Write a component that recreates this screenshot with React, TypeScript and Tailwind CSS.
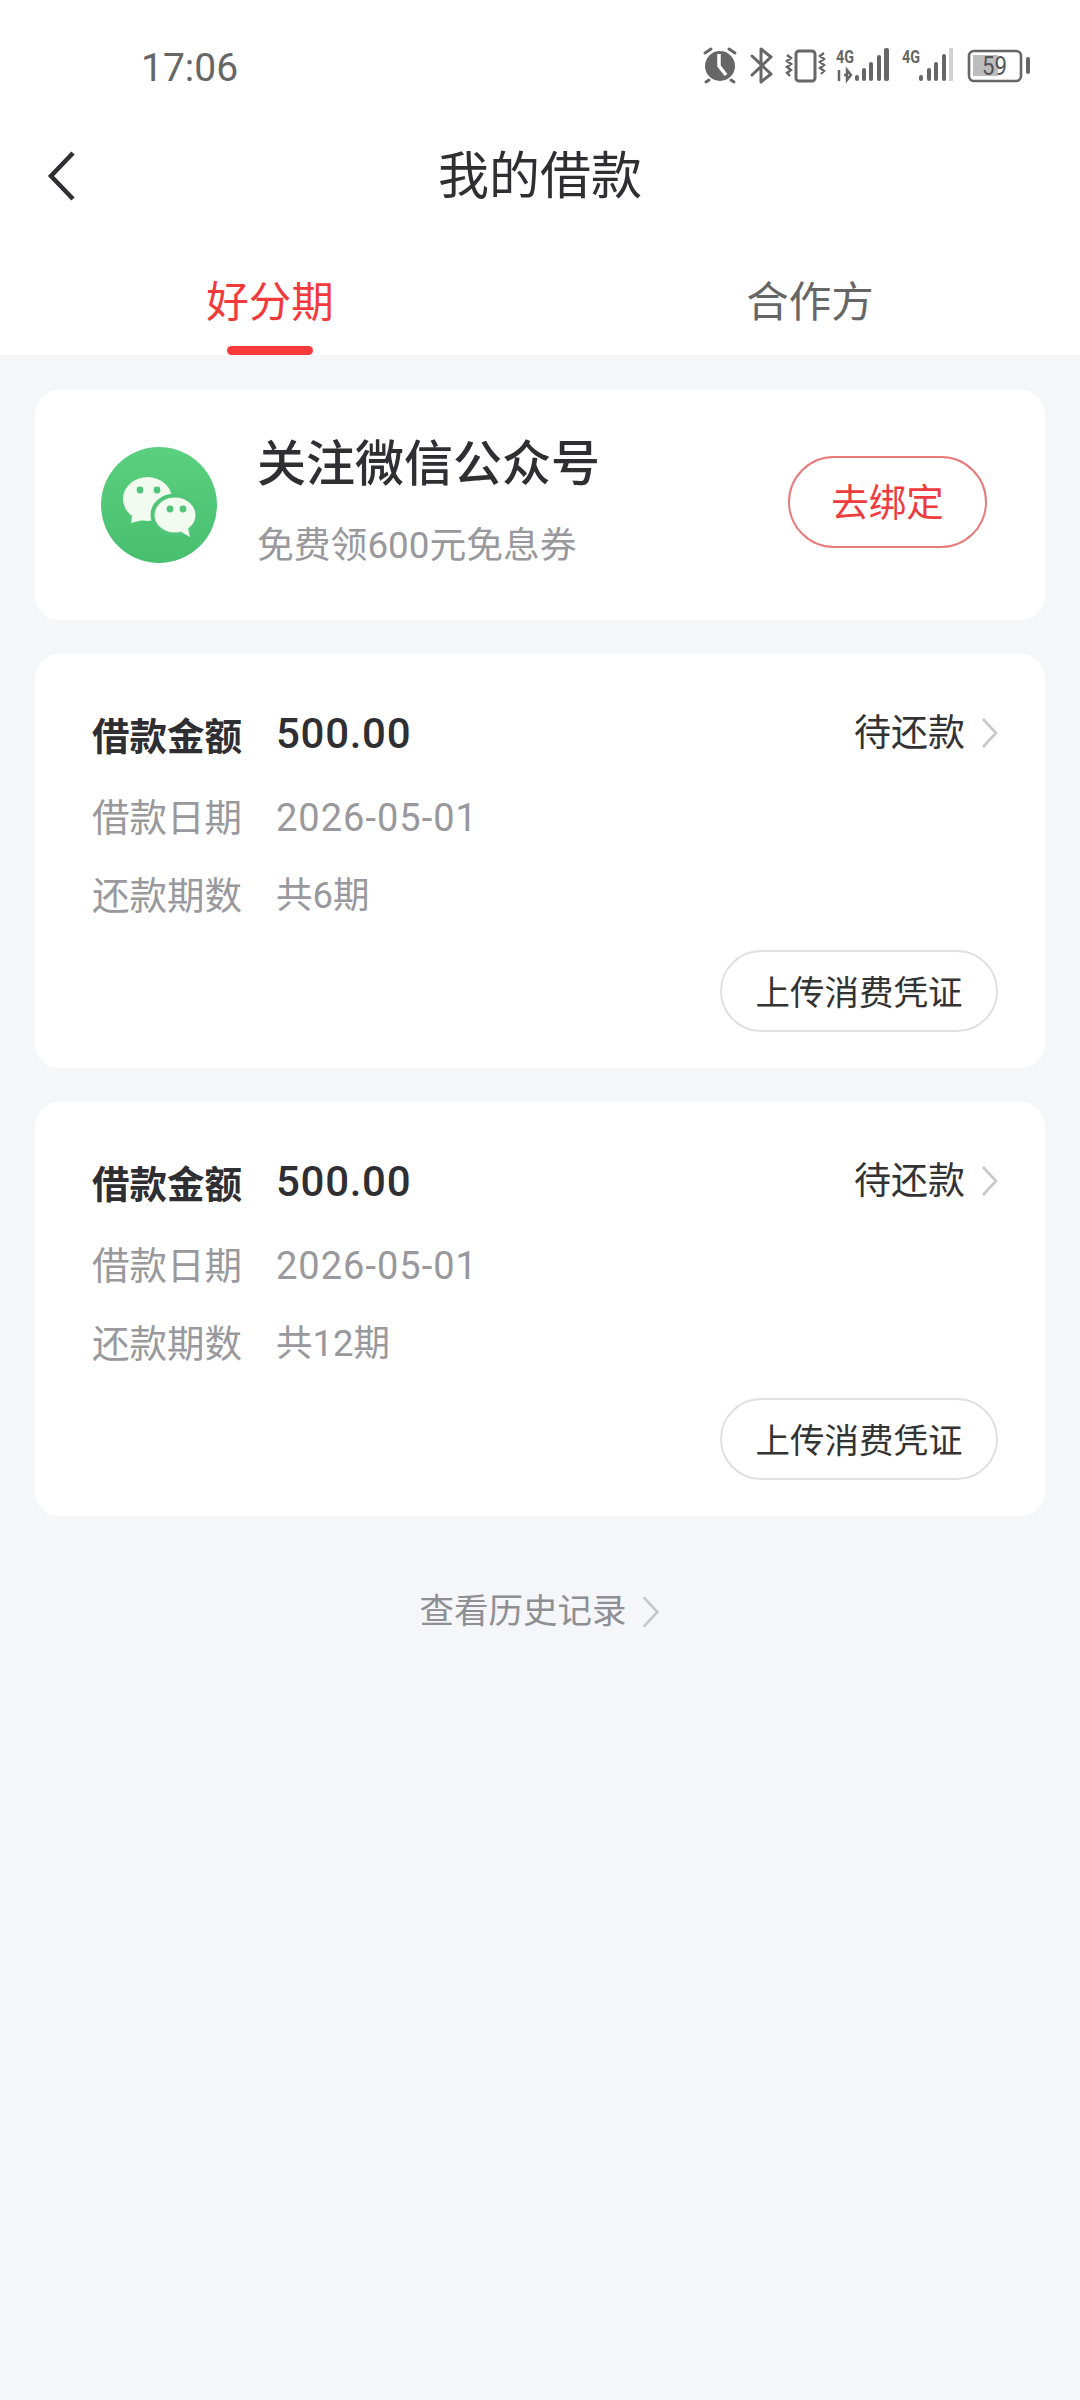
import React from "react";

const FONT = "font-['Roboto','Noto_Sans_CJK_SC',sans-serif]";

// status bar icons, drawn at the size they have in the screenshot
function StatusIcons() {
  const c = "#666666";
  return (
    <svg width="330" height="50" viewBox="0 0 330 50" fill="none">
      {/* alarm */}
      <circle cx="20" cy="24" r="15" fill={c} />
      <path d="M19 12v12l7 9" stroke="#fff" strokeWidth="3.5" />
      <path d="M5 11l6-4M35 11l-6-4M9 38l-3 2M31 38l3 2" stroke={c} strokeWidth="3" strokeLinecap="round" />
      {/* bluetooth */}
      <path d="M52 14l19 18-10 8V7l10 8-19 18" stroke={c} strokeWidth="3" strokeLinejoin="round" strokeLinecap="round" />
      {/* vibrate */}
      <rect x="96" y="9" width="19" height="30" rx="3" stroke={c} strokeWidth="3" />
      <path d="M87 13l4 3-4 3 4 3-4 3 4 3-4 3 3 3M124 11l-4 3 4 3-4 3 4 3-4 3 4 3-3 3" stroke={c} strokeWidth="2.4" />
      {/* sim 1 */}
      <text x="136" y="21" fontFamily="Roboto, sans-serif" fontWeight="700" fontSize="18" textLength="18" lengthAdjust="spacingAndGlyphs" fill={c}>4G</text>
      <path d="M139 28v11M144 33h2M147 28l4 5-4 5z" stroke={c} strokeWidth="2.5" />
      <rect x="155" y="33" width="4" height="6" rx="2" fill={c} />
      <rect x="162" y="26" width="4" height="13" rx="2" fill={c} />
      <rect x="169" y="20" width="4" height="19" rx="2" fill={c} />
      <rect x="177" y="13" width="4" height="26" rx="2" fill={c} />
      <rect x="184" y="6" width="5" height="33" rx="2" fill={c} />
      {/* sim 2 */}
      <text x="202" y="21" fontFamily="Roboto, sans-serif" fontWeight="700" fontSize="18" textLength="18" lengthAdjust="spacingAndGlyphs" fill={c}>4G</text>
      <rect x="219" y="33" width="4" height="6" rx="2" fill={c} />
      <rect x="227" y="26" width="4" height="13" rx="2" fill={c} />
      <rect x="234" y="20" width="4" height="19" rx="2" fill={c} />
      <rect x="242" y="12" width="4" height="27" rx="2" fill={c} />
      <rect x="249" y="6" width="4" height="33" fill="#d2d2d2" />
      {/* battery */}
      <rect x="269" y="9" width="52" height="30" rx="5" stroke={c} strokeWidth="2.6" />
      <rect x="273" y="13" width="25" height="21" fill="#bdbdbd" />
      <text x="282" y="33" fontFamily="Roboto, sans-serif" fontSize="26" textLength="25" lengthAdjust="spacingAndGlyphs" fill="#555555">59</text>
      <rect x="326" y="15" width="4" height="17" rx="2" fill={c} />
    </svg>
  );
}

function WechatLogo() {
  return (
    <svg width="116" height="116" viewBox="0 0 116 116" className="shrink-0">
      <defs>
        <linearGradient id="wechatBg" x1="0" y1="0" x2="0" y2="1">
          <stop offset="0" stopColor="#5bd07f" />
          <stop offset="1" stopColor="#47bf6f" />
        </linearGradient>
      </defs>
      <circle cx="58" cy="58" r="58" fill="url(#wechatBg)" />
      <ellipse cx="46.5" cy="52" rx="24.5" ry="22" fill="#f2fbef" />
      <path d="M31 69l-1 7 12-3z" fill="#f2fbef" />
      <ellipse cx="74" cy="68" rx="22.5" ry="19.5" fill="#f2fbef" stroke="#50c577" strokeWidth="4" />
      <path d="M80 85l9 5-2-9z" fill="#f2fbef" />
      <circle cx="39" cy="43" r="3.4" fill="#50c577" />
      <circle cx="56" cy="43" r="3.4" fill="#50c577" />
      <circle cx="69" cy="62" r="3.4" fill="#50c577" />
      <circle cx="82" cy="62" r="3.4" fill="#50c577" />
    </svg>
  );
}

function Chevron({ color, w, h }: { color: string; w: number; h: number }) {
  return (
    <svg width={w} height={h} viewBox="0 0 18 32" fill="none">
      <path d="M2 2l13 14L2 30" stroke={color} strokeWidth="2.6" />
    </svg>
  );
}

function LoanCard({ periods }: { periods: string }) {
  return (
    <div className="h-[414px] rounded-[24px] bg-white pl-[57px] pr-[46px] pt-[52px]">
      <div className="flex h-[58px] items-center justify-between">
        <div className="flex items-center">
          <span className="w-[184px] pt-[5px] text-[37.5px] font-bold text-[#2f2f33]">借款金额</span>
          <span className="pb-[3px] text-[42px] font-medium tracking-[0.7px] text-[#2f2f33]">500.00</span>
        </div>
        <div className="flex items-center">
          <span className="pb-[3px] text-[37px] text-[#333333]">待还款</span>
          <span className="mb-[5px] ml-[16px]">
            <Chevron color="#c8c8c8" w={18} h={32} />
          </span>
        </div>
      </div>
      <div className="mt-[28px] flex h-[52px] items-center text-[37.5px] text-[#98989d]">
        <span className="w-[184px]">借款日期</span>
        <span className="text-[38px] tracking-[1px]">2026-05-01</span>
      </div>
      <div className="mt-[26px] flex h-[52px] items-center text-[37.5px] text-[#98989d]">
        <span className="w-[184px]">还款期数</span>
        <span className="text-[36.5px]">{periods}</span>
      </div>
      <div className="mr-[1px] mt-[28px] flex justify-end">
        <div className="flex h-[82px] w-[278px] items-center justify-center rounded-full border-2 border-[#e0e0e0] pt-[6px] text-[34.5px] text-[#333333]">
          上传消费凭证
        </div>
      </div>
    </div>
  );
}

export default function App() {
  return (
    <div className={`${FONT} flex h-[2400px] w-[1080px] flex-col bg-[#f4f6fa]`}>
      <div className="bg-white">
        {/* status bar */}
        <div className="flex h-[120px] items-start justify-between pl-[141px] pr-[50px] pt-[42px]">
          <span className="pt-[2px] text-[39px] leading-[48px] text-[#666666]">17:06</span>
          <StatusIcons />
        </div>
        {/* title */}
        <div className="relative flex h-[112px] items-center justify-center">
          <svg width="30" height="50" viewBox="0 0 30 50" fill="none" className="absolute left-[47px] top-[31px]">
            <path d="M26 2L4 25l22 23" stroke="#2f2f33" strokeWidth="4.5" />
          </svg>
          <span className="pt-[2px] text-[51px] text-[#2f2f33]">我的借款</span>
        </div>
        {/* tabs */}
        <div className="flex h-[123px] text-[42.5px]">
          <div className="relative flex w-[540px] items-start justify-center pt-[39px] text-[#f23a3c]">
            好分期
            <span className="absolute bottom-0 left-[227px] h-[9px] w-[86px] rounded-full bg-[#f93a3d]" />
          </div>
          <div className="flex w-[540px] items-start justify-center pt-[39px] text-[#666666]">合作方</div>
        </div>
      </div>

      <div className="flex flex-col gap-[34px] px-[35px] pt-[35px]">
        <div className="flex h-[230px] items-center rounded-[24px] bg-white pl-[66px] pr-[58px]">
          <WechatLogo />
          <div className="ml-[40px] flex-1 pb-[6px]">
            <div className="text-[49px] font-medium leading-[64px] text-[#2f2f33]">关注微信公众号</div>
            <div className="mt-[24px] text-[36.8px] leading-[50px] text-[#98989d]">免费领600元免息券</div>
          </div>
          <div className="mb-[6px] flex h-[92px] w-[199px] items-center justify-center rounded-full border-2 border-[#e87a7a] pt-[2px] text-[37.5px] text-[#ee3c3e]">
            去绑定
          </div>
        </div>
        <LoanCard periods="共6期" />
        <LoanCard periods="共12期" />
      </div>

      <div className="mt-[70px] flex items-center justify-center text-[34.5px] text-[#8e8e93]">
        查看历史记录
        <span className="ml-[14px]">
          <Chevron color="#c8c8c8" w={20} h={34} />
        </span>
      </div>
    </div>
  );
}
